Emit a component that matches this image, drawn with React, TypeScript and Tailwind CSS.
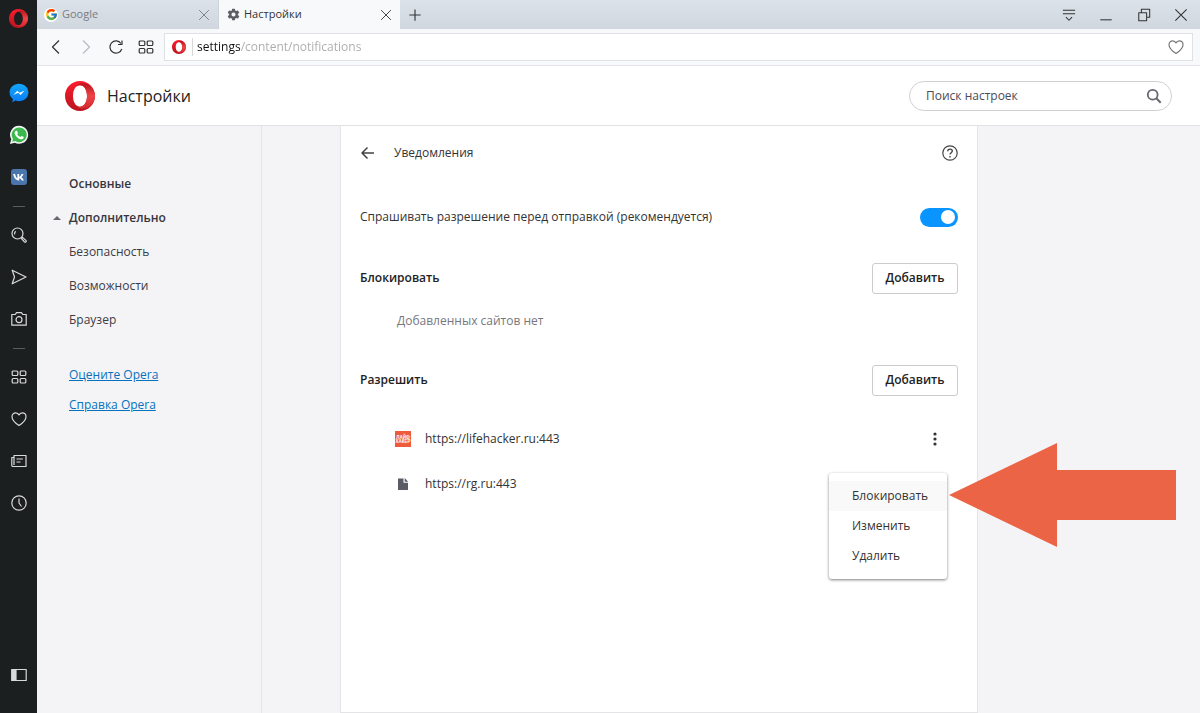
import { FC, ReactNode, useState } from "react";
import { FcGoogle } from "react-icons/fc";
import { IoSettingsSharp } from "react-icons/io5";

const Icon: FC<{ size?: number; className?: string; children: ReactNode }> = ({
  size = 16,
  className,
  children,
}) => (
  <svg
    width={size}
    height={size}
    viewBox="0 0 16 16"
    fill="none"
    stroke="currentColor"
    strokeWidth="1.2"
    strokeLinejoin="round"
    className={className}
    aria-hidden="true"
  >
    {children}
  </svg>
);

const OperaLogo: FC<{ size: number; id: string }> = ({ size, id }) => (
  <svg width={size} height={size} viewBox="0 0 30 30" aria-hidden="true">
    <defs>
      <linearGradient id={`${id}-ring`} x1="0" y1="0" x2="0" y2="1">
        <stop offset="0" stopColor="#ff1b2d" />
        <stop offset="1" stopColor="#b8141f" />
      </linearGradient>
      <linearGradient id={`${id}-side`} x1="0" y1="0" x2="0" y2="1">
        <stop offset="0" stopColor="#b5151d" />
        <stop offset="0.5" stopColor="#ee4448" />
        <stop offset="1" stopColor="#d32a30" />
      </linearGradient>
    </defs>
    <path
      fill={`url(#${id}-ring)`}
      fillRule="evenodd"
      d="M15 0C6.700 0 0 6.700 0 15s6.700 15 15 15 15-6.700 15-15S23.300 0 15 0Zm0 4.300c4.200 0 7 4.700 7 10.700S19.200 25.700 15 25.700 8 21 8 15 10.800 4.300 15 4.300Z"
    />
    <path
      fill={`url(#${id}-side)`}
      d="M11 5.800C12.500 3.500 14.500 2.300 17 2.300c3.300 0 6 1 8.100 2.500C28.100 7.500 30 11 30 15s-1.900 7.500-4.900 10.200c-2.100 1.500-4.800 2.500-8.100 2.500-2.500 0-4.500-1.200-6-3.500 1.100 1 2.500 1.500 4 1.500 4.200 0 7-4.700 7-10.700S19.200 4.300 15 4.300c-1.500 0-2.900.5-4 1.500Z"
    />
  </svg>
);

const GridIcon = () => (
  <Icon>
    <rect x="1.200" y="2" width="5.600" height="4.500" rx="1" />
    <rect x="9.200" y="2" width="5.600" height="4.500" rx="1" />
    <rect x="1.200" y="9.500" width="5.600" height="4.500" rx="1" />
    <rect x="9.200" y="9.500" width="5.600" height="4.500" rx="1" />
  </Icon>
);

const HeartIcon = () => (
  <Icon>
    <path d="M8 14.500C3.500 11.500 1 8.800 1 5.700 1 3.400 2.700 1.800 4.700 1.800 6.200 1.800 7.400 2.600 8 4c.6-1.400 1.800-2.200 3.300-2.200 2 0 3.700 1.600 3.700 3.900 0 3.100-2.500 5.800-7 8.800Z" />
  </Icon>
);

const CloseIcon = () => (
  <Icon size={12}>
    <path d="M1.500 1.500l13 13M14.500 1.500l-13 13" />
  </Icon>
);

const MessengerIcon = () => (
  <svg width="20" height="20" viewBox="0 0 20 20" aria-hidden="true">
    <defs>
      <linearGradient id="messenger" x1="0" y1="0" x2="0" y2="1">
        <stop offset="0" stopColor="#12a8fa" />
        <stop offset="1" stopColor="#0a7cf5" />
      </linearGradient>
    </defs>
    <path
      fill="url(#messenger)"
      d="M10 .8C4.800.8.600 4.600.600 9.500c0 2.700 1.300 5 3.300 6.600l-.7 3.200 3.300-1.700c1.100.4 2.300.6 3.500.6 5.200 0 9.400-3.800 9.400-8.700S15.200.8 10 .8Z"
    />
    <path fill="#fff" d="M4.300 12 8.300 7.700l2.300 2.100 5-2.200-4 4.300-2.300-2.100Z" />
  </svg>
);

const WhatsAppIcon = () => (
  <svg width="20" height="20" viewBox="0 0 20 20" aria-hidden="true">
    <path fill="#f4f4f4" d="M10.200.8a9 9 0 0 0-7.900 13.500L.9 19l4.900-1.300A9 9 0 1 0 10.200.8Z" />
    <path fill="#3cb94c" d="M10.200 2.400a7.400 7.400 0 0 0-6.200 11.500l-.8 2.900 3-.8a7.400 7.400 0 1 0 4-13.600Z" />
    <path
      fill="#fff"
      d="M7.300 5.800c.4-.1.700 0 .8.300l.8 1.800c.1.300-.5 1-.7 1.300.8 1.400 1.800 2.200 3.200 2.800.4-.3.900-1.200 1.200-1.100l1.900.9c.5.3.1 1.400-.4 1.900-.9.800-2.200.8-3.600.2-2.200-.9-3.900-2.700-4.700-4.800-.4-1.200 0-2.900 1.500-3.300Z"
    />
  </svg>
);

const VkIcon = () => (
  <svg width="18" height="18" viewBox="0 0 18 18" aria-hidden="true">
    <rect x="1" y="1" width="16" height="16" rx="3" fill="#4a76ad" />
    <path
      fill="#fff"
      d="M9.300 12.500C6 12.500 3.900 10.200 3.200 6h1.900c.4 2.300 1.200 3.700 2.300 4.200V6h1.800v2.700c1-.2 1.900-1.300 2.300-2.700h1.900c-.3 1.400-1.100 2.500-2.100 3.200 1.100.6 2 1.700 2.500 3.300h-2c-.4-1.100-1.300-2-2.600-2.200v2.200Z"
    />
  </svg>
);

const SidebarButton: FC<{ label: string; children: ReactNode }> = ({ label, children }) => (
  <button
    type="button"
    aria-label={label}
    className="flex h-[42px] w-full items-center justify-center text-[#d8dadb]"
  >
    {children}
  </button>
);

const SidebarDivider = () => (
  <div className="flex h-4 items-center">
    <div className="h-px w-3 bg-[#5a5d5f]" />
  </div>
);

const Sidebar = () => (
  <aside className="flex w-[37px] shrink-0 flex-col items-center bg-[#1c1f20]">
    <button type="button" aria-label="Opera" className="flex h-9 w-full items-center justify-center">
      <OperaLogo size={19} id="menu" />
    </button>
    <div className="mt-9 flex w-full flex-col items-center">
      <SidebarButton label="Messenger">
        <MessengerIcon />
      </SidebarButton>
      <SidebarButton label="WhatsApp">
        <WhatsAppIcon />
      </SidebarButton>
      <SidebarButton label="ВКонтакте">
        <VkIcon />
      </SidebarButton>
      <SidebarDivider />
      <SidebarButton label="Поиск">
        <Icon>
          <circle cx="6.500" cy="6.500" r="5.500" />
          <path d="M3.700 7.500a3 3 0 0 1 1-3.200" />
          <path d="m10.500 11.500 1.100-1.100 3.500 3.200c.5.900-.6 2-1.500 1.500Z" />
        </Icon>
      </SidebarButton>
      <SidebarButton label="Моя лента">
        <Icon>
          <path d="M1.200 1.200 15 8 1.200 14.800 3.500 8Z" />
        </Icon>
      </SidebarButton>
      <SidebarButton label="Снимок">
        <Icon>
          <path d="M.8 3.500h3.500L5.500 1.700h5l1.200 1.800h3.500v10.700H.8Z" />
          <circle cx="8" cy="8.700" r="3" />
        </Icon>
      </SidebarButton>
      <SidebarDivider />
      <SidebarButton label="Экспресс-панель">
        <GridIcon />
      </SidebarButton>
      <SidebarButton label="Закладки">
        <HeartIcon />
      </SidebarButton>
      <SidebarButton label="Новости">
        <Icon>
          <path d="M3 2.500h12v11H2A1.200 1.200 0 0 1 .8 12.300V4.500H3Z" />
          <path d="M3 4.500v7.500M5.500 6h6.500M5.500 9h4" />
        </Icon>
      </SidebarButton>
      <SidebarButton label="История">
        <Icon>
          <circle cx="8" cy="8" r="7.200" />
          <path d="M8 3.500V8l2.500 3.500" />
        </Icon>
      </SidebarButton>
    </div>
    <div className="mt-auto mb-[17px] w-full">
      <SidebarButton label="Боковая панель">
        <Icon>
          <rect x=".8" y="2.500" width="14.400" height="11" />
          <rect x="1" y="2.500" width="4" height="11" fill="currentColor" />
        </Icon>
      </SidebarButton>
    </div>
  </aside>
);

const TabStrip = () => (
  <div className="flex h-[29px] bg-linear-to-b from-[#dce2ea] to-[#d1d7df] text-[#333]">
    <div className="flex w-[182px] items-center border-r border-[#ccd2da] pr-2 pl-[7px] text-[#777c82]">
      <span className="flex size-[14px] items-center justify-center rounded-full bg-white">
        <FcGoogle size={13} />
      </span>
      <span className="ml-1 grow text-[11px]">Google</span>
      <button type="button" aria-label="Закрыть вкладку Google">
        <CloseIcon />
      </button>
    </div>
    <div className="flex w-[181px] items-center bg-[#f7f9fb] px-2">
      <IoSettingsSharp size={13} className="text-[#5c6065]" />
      <span className="ml-1 grow text-[11px]">Настройки</span>
      <button type="button" aria-label="Закрыть вкладку Настройки">
        <CloseIcon />
      </button>
    </div>
    <button type="button" aria-label="Новая вкладка" className="px-[9px]">
      <Icon size={12}>
        <path d="M8 .5v15M.5 8h15" strokeWidth="1.500" />
      </Icon>
    </button>
    <div className="ml-auto flex">
      <button type="button" aria-label="Меню вкладок" className="flex w-[37px] items-center justify-center">
        <Icon size={14}>
          <path d="M1 2.500h14M1 6.500h14M4.500 10.500 8 14l3.500-3.500" />
        </Icon>
      </button>
      <button type="button" aria-label="Свернуть" className="flex w-[38px] items-center justify-center">
        <Icon size={14}>
          <path d="M1.500 13.500h13" />
        </Icon>
      </button>
      <button type="button" aria-label="Развернуть" className="flex w-[37px] items-center justify-center">
        <Icon size={14}>
          <path d="M2 5.500h9v9H2ZM5 5.500v-4h9.500v9H11" />
        </Icon>
      </button>
      <button type="button" aria-label="Закрыть" className="flex w-[38px] items-center justify-center">
        <Icon size={14}>
          <path d="M1.500 1.500l13 13M14.500 1.500l-13 13" />
        </Icon>
      </button>
    </div>
  </div>
);

const ToolButton: FC<{ label: string; disabled?: boolean; children: ReactNode }> = ({
  label,
  disabled,
  children,
}) => (
  <button
    type="button"
    aria-label={label}
    disabled={disabled}
    className="flex w-[30px] shrink-0 items-center justify-center text-[#333] disabled:text-[#b9bcc0]"
  >
    {children}
  </button>
);

const Toolbar = () => (
  <div className="flex h-[37px] items-center border-b border-[#e3e5e8] bg-[#f7f9fb] pr-[7px] pl-1">
    <ToolButton label="Назад">
      <Icon>
        <path d="M11 1.500 4.500 8l6.500 6.500" />
      </Icon>
    </ToolButton>
    <ToolButton label="Вперёд" disabled>
      <Icon>
        <path d="M5 1.500 11.500 8 5 14.500" />
      </Icon>
    </ToolButton>
    <ToolButton label="Обновить">
      <Icon>
        <path d="M13.800 10A6.100 6.100 0 1 1 13 4.500" />
        <path d="M14 1.500v4h-4" />
      </Icon>
    </ToolButton>
    <ToolButton label="Экспресс-панель">
      <GridIcon />
    </ToolButton>
    <div className="ml-[3px] flex h-7 grow items-center border border-[#dfe1e4] bg-white pr-2 pl-[7px]">
      <OperaLogo size={14} id="address" />
      <div className="ml-[6px] h-[18px] w-px bg-[#d5d7da]" />
      <input
        type="text"
        aria-label="Адрес"
        defaultValue="settings/content/notifications"
        className="ml-1 grow bg-[linear-gradient(to_right,#111_43px,#aaa_43px)] bg-clip-text text-[12px] text-transparent outline-none"
      />
      <button type="button" aria-label="Добавить в закладки" className="text-[#777]">
        <HeartIcon />
      </button>
    </div>
  </div>
);

const Header = () => (
  <header className="flex h-[60px] items-center justify-between border-b border-[#e0e1e3] bg-white px-7">
    <div className="flex items-center gap-3">
      <OperaLogo size={30} id="brand" />
      <h1 className="text-[16px] font-medium text-[#222]">Настройки</h1>
    </div>
    <div className="flex h-[30px] w-[263px] items-center rounded-full border border-[#d0d1d3] pr-[9px] pl-4">
      <input
        type="search"
        aria-label="Поиск настроек"
        placeholder="Поиск настроек"
        className="min-w-0 grow text-[12px] font-medium outline-none placeholder:text-[#4b4b56]"
      />
      <button type="button" aria-label="Найти" className="text-[#66666e]">
        <Icon>
          <circle cx="6.700" cy="6.700" r="4.900" strokeWidth="1.800" />
          <path d="m10.300 10.300 4.400 4.400" strokeWidth="2" />
        </Icon>
      </button>
    </div>
  </header>
);

const Navigation = () => (
  <nav className="w-[225px] shrink-0 border-r border-[#e4e4e7] pt-[41px] pl-4 text-[12px] text-[#3c3c44]">
    <ul className="font-medium">
      <li className="flex h-[34px] items-center pl-4 font-semibold text-[#36363c]">
        <a href="#basic">Основные</a>
      </li>
      <li className="flex h-[34px] items-center font-semibold text-[#36363c]">
        <svg width="8" height="4" viewBox="0 0 8 4" className="mr-2" fill="#66666e" aria-hidden="true">
          <path d="M4 0l4 4H0Z" />
        </svg>
        <a href="#advanced">Дополнительно</a>
      </li>
      {["Безопасность", "Возможности", "Браузер"].map((item) => (
        <li key={item} className="flex h-[34px] items-center pl-4">
          <a href="#section">{item}</a>
        </li>
      ))}
    </ul>
    <div className="mt-[23px] pl-4 font-medium text-[#0672bc]">
      {["Оцените Opera", "Справка Opera"].map((item) => (
        <div key={item} className="flex h-[30px] items-center">
          <a href="#opera" className="underline">
            {item}
          </a>
        </div>
      ))}
    </div>
  </nav>
);

const AddButton = () => (
  <button
    type="button"
    className="h-[31px] w-[86px] rounded-[3px] border border-[#ccc] text-[12px] font-semibold text-[#222]"
  >
    Добавить
  </button>
);

const menuItems = ["Блокировать", "Изменить", "Удалить"];

const SiteMenu = () => (
  <div
    role="menu"
    className="absolute top-3 right-[11px] w-[118px] rounded-[3px] bg-white py-2 shadow-[0_1px_3px_rgba(0,0,0,0.5)]"
  >
    {menuItems.map((item) => (
      <button
        key={item}
        type="button"
        role="menuitem"
        className="block h-[30px] w-full pl-[23px] text-left first:bg-[#f9f9fa]"
      >
        {item}
      </button>
    ))}
    <svg
      width="227"
      height="104"
      viewBox="0 0 227 104"
      className="absolute top-[-30px] left-full ml-[2px]"
      fill="#ec6446"
      aria-hidden="true"
    >
      <path d="M0 52 108 0v27h119v50H108v27Z" />
    </svg>
  </div>
);

const Notifications = () => {
  const [ask, setAsk] = useState(true);

  return (
    <main className="ml-[78px] w-full max-w-[638px] border-x border-b border-[#e4e4e7] bg-white px-[19px] text-[12px] text-[#333]">
      <div className="flex h-[54px] items-center">
        <button type="button" aria-label="Назад к настройкам" className="text-[#444]">
          <Icon>
            <path d="M14 8H2M7.500 2.500 2 8l5.500 5.500" strokeWidth="1.500" />
          </Icon>
        </button>
        <h2 className="ml-[18px] grow">Уведомления</h2>
        <button type="button" aria-label="Справка" className="text-[#444]">
          <Icon>
            <circle cx="8" cy="8" r="7.200" />
            <path d="M5.700 6.300C5.700 5 6.600 4.100 8 4.100s2.300.9 2.300 2c0 1.500-2.300 1.700-2.300 3.400M8 11v1.500" strokeWidth="1.400" />
          </Icon>
        </button>
      </div>

      <div className="flex h-[74px] items-center justify-between">
        <label htmlFor="ask">Спрашивать разрешение перед отправкой (рекомендуется)</label>
        <input
          id="ask"
          type="checkbox"
          checked={ask}
          onChange={(e) => setAsk(e.target.checked)}
          className="flex h-[19px] w-[38px] appearance-none items-center rounded-full bg-[#aaa] px-[3px] before:size-[14px] before:rounded-full before:bg-white checked:justify-end checked:bg-[#0a94ff]"
        />
      </div>

      <section>
        <div className="flex h-12 items-center justify-between">
          <h3 className="font-semibold text-[#222]">Блокировать</h3>
          <AddButton />
        </div>
        <p className="flex h-[38px] items-center pl-[37px] text-[#77777d]">Добавленных сайтов нет</p>
      </section>

      <section className="mt-4">
        <div className="flex h-12 items-center justify-between">
          <h3 className="font-semibold text-[#222]">Разрешить</h3>
          <AddButton />
        </div>
        <ul className="mt-3 pl-[35px]">
          <li className="flex h-[45px] items-center">
            <svg width="16" height="16" viewBox="0 0 16 16" aria-hidden="true">
              <rect width="16" height="16" fill="#ee5a3c" />
              <g fill="#fff" fontFamily="Liberation Sans, sans-serif" fontWeight="700" fontSize="4.500" textAnchor="middle">
                <text x="8" y="7.500">ЛАЙФ</text>
                <text x="8" y="12">ХАКЕР</text>
              </g>
            </svg>
            <span className="ml-[14px] grow">https://lifehacker.ru:443</span>
            <button type="button" aria-label="Действия" className="mr-[15px] text-[#333]">
              <svg width="16" height="16" viewBox="0 0 16 16" fill="currentColor" aria-hidden="true">
                <circle cx="8" cy="3" r="1.600" />
                <circle cx="8" cy="8" r="1.600" />
                <circle cx="8" cy="13" r="1.600" />
              </svg>
            </button>
          </li>
          <li className="relative flex h-[45px] items-center">
            <svg width="16" height="16" viewBox="0 0 16 16" fill="#5b5b66" aria-hidden="true">
              <path d="M3 2.500h5.500v4.300H13v7.200H3ZM9.700 2l3.500 3.700H9.700Z" />
            </svg>
            <span className="ml-[14px]">https://rg.ru:443</span>
            <SiteMenu />
          </li>
        </ul>
      </section>
    </main>
  );
};

const App: FC = () => (
  <div className="flex min-h-screen bg-[#f4f4f7] font-['Open_Sans','Noto_Sans',sans-serif]">
    <Sidebar />
    <div className="flex min-w-0 grow flex-col">
      <TabStrip />
      <Toolbar />
      <Header />
      <div className="flex grow">
        <Navigation />
        <Notifications />
      </div>
    </div>
  </div>
);

export default App;
